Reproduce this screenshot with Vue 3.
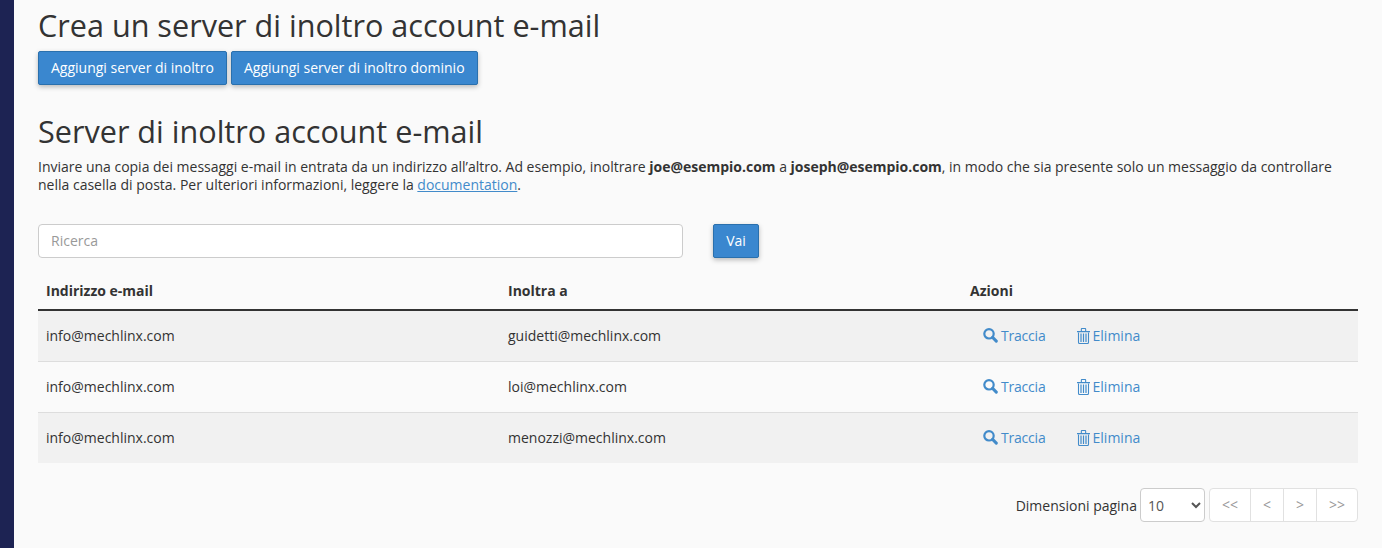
<template>
  <div class="page">
    <aside class="sidebar"></aside>
    <main class="content">
      <h1 class="title">Crea un server di inoltro account e-mail</h1>
      <div class="actions">
        <button class="btn">Aggiungi server di inoltro</button>
        <button class="btn">Aggiungi server di inoltro dominio</button>
      </div>

      <h1 class="title second">Server di inoltro account e-mail</h1>
      <p class="intro">
        <span class="tight">Inviare una copia dei messaggi e-mail in entrata da un indirizzo all’altro. Ad esempio, inoltrare
        <b>joe@esempio.com</b> a <b>joseph@esempio.com</b>, in modo che sia presente solo un messaggio da controllare</span>
        nella casella di posta. Per ulteriori informazioni, leggere la <a href="#">documentation</a>.
      </p>

      <div class="search">
        <input class="search-input" type="text" placeholder="Ricerca" />
        <button class="btn go">Vai</button>
      </div>

      <table class="list">
        <thead>
          <tr>
            <th class="col-mail">Indirizzo e-mail</th>
            <th class="col-to">Inoltra a</th>
            <th>Azioni</th>
          </tr>
        </thead>
        <tbody>
          <tr v-for="row in rows" :key="row">
            <td>info@mechlinx.com</td>
            <td>{{ row }}</td>
            <td class="row-actions">
              <a href="#" class="act track">
                <svg width="15" height="15" viewBox="0 0 15 15" aria-hidden="true">
                  <circle cx="6" cy="5.8" r="4.7" fill="none" stroke="currentColor" stroke-width="2.2" />
                  <path d="M9.6 9.4 13.3 13.1" stroke="currentColor" stroke-width="3" stroke-linecap="round" />
                </svg>
                Traccia
              </a>
              <a href="#" class="act">
                <svg width="13" height="16" viewBox="0 0 13 16" aria-hidden="true">
                  <path d="M0 3h13v1.2H0zM3.8 3V1.2C3.8.5 4.3 0 5 0h3c.7 0 1.2.5 1.2 1.2V3H8.1V1.1H4.9V3z" fill="currentColor" />
                  <path d="M1.5 4.5v9.8c0 .7.4 1.2 1 1.2h8c.6 0 1-.5 1-1.2V4.5" fill="none" stroke="currentColor" stroke-width="1.1" />
                  <path d="M4 5.5V14M6.5 5.5V14M9 5.5V14" stroke="currentColor" stroke-width="1.2" />
                </svg>
                Elimina
              </a>
            </td>
          </tr>
        </tbody>
      </table>

      <div class="pager">
        <span class="pager-label">Dimensioni pagina</span>
        <select class="size">
          <option>10</option>
        </select>
        <div class="pages">
          <span class="first">&lt;&lt;</span>
          <span>&lt;</span>
          <span>&gt;</span>
          <span class="last">&gt;&gt;</span>
        </div>
      </div>
    </main>
  </div>
</template>

<script setup>
const rows = ['guidetti@mechlinx.com', 'loi@mechlinx.com', 'menozzi@mechlinx.com']
</script>

<style>
html, body {
  margin: 0;
  background: #fafafa;
}
</style>

<style scoped>
.page {
  display: flex;
  height: 548px;
  overflow: hidden;
  font-family: "Open Sans", "DejaVu Sans", sans-serif;
  font-size: 14px;
  line-height: 18px;
  color: #333;
  background: #fafafa;
}

.sidebar {
  width: 14px;
  flex: none;
  background: #1d2353;
}

.content {
  flex: 1;
  padding: 0 24px;
  min-width: 0;
}

.title {
  margin: 7px 0 0;
  font-size: 30.6px;
  line-height: 36px;
  font-weight: 400;
  color: #333;
}

.second {
  margin-top: 28px;
}

.actions {
  display: flex;
  gap: 4px;
  margin-top: 8px;
}

.btn {
  height: 34px;
  padding: 0 12px;
  border: 1px solid #2a70ad;
  border-radius: 2px;
  background: #3a87cf;
  color: #fff;
  font: inherit;
  box-shadow: 0 2px 5px rgba(0, 0, 0, 0.26);
}

.intro {
  margin: 9px 0 0;
}

.tight {
  letter-spacing: -0.012px;
}

.intro b {
  font-weight: 700;
}

.intro a {
  color: #428bca;
}

.search {
  display: flex;
  gap: 30px;
  margin-top: 30px;
}

.search-input {
  width: 645px;
  height: 34px;
  box-sizing: border-box;
  padding: 0 12px 2px;
  border: 1px solid #ccc;
  border-radius: 4px;
  background: #fff;
  font: inherit;
  outline: none;
}

.search-input::placeholder {
  color: #999;
}

.go {
  width: 46px;
  padding: 0;
}

.list {
  width: 100%;
  margin-top: 16px;
  border-collapse: collapse;
  table-layout: fixed;
}

.list th {
  height: 36px;
  padding: 0 8px 2px;
  box-sizing: border-box;
  text-align: left;
  font-weight: 700;
  border-bottom: 2px solid #333;
}

.col-mail,
.col-to {
  width: 462px;
}

.list td {
  box-sizing: border-box;
  height: 51px;
  padding: 0 8px;
  border-bottom: 1px solid #ddd;
}

.list tbody tr:nth-child(odd) {
  background: #f1f1f1;
}

.list tbody tr:last-child td {
  border-bottom: 0;
}

.row-actions {
  white-space: nowrap;
}

.act {
  display: inline-flex;
  align-items: center;
  vertical-align: top;
  gap: 3px;
  color: #428bca;
  text-decoration: none;
}

.track {
  margin-left: 13px;
  margin-right: 31px;
  letter-spacing: -0.2px;
}

.pager {
  display: flex;
  justify-content: flex-end;
  align-items: center;
  margin-top: 25px;
}

.pager-label {
  margin-right: 3px;
  padding-top: 2px;
}

.size {
  width: 65px;
  height: 34px;
  padding: 0 3px;
  border: 1px solid #ccc;
  border-radius: 4px;
  background: #fff;
  font: inherit;
  color: #555;
}

.pages {
  display: flex;
  height: 34px;
  box-sizing: border-box;
  margin-left: 4px;
  border: 1px solid #e1e1e1;
  border-radius: 4px;
  background: #fff;
  color: #999;
}

.pages span {
  display: flex;
  box-sizing: border-box;
  width: 33px;
  align-items: center;
  justify-content: center;
  border-left: 1px solid #e1e1e1;
}

.pages .first {
  width: 40px;
  border-left: 0;
}

.pages .last {
  width: 41px;
}
</style>
